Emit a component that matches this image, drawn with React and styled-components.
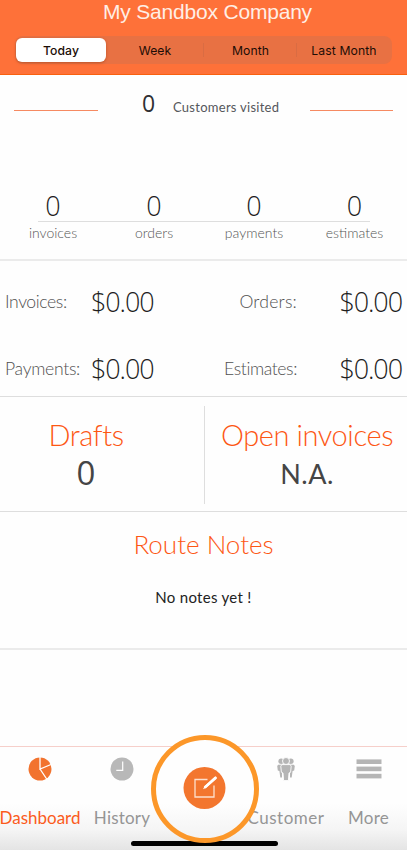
import React from "react";
import styled, { createGlobalStyle } from "styled-components";

const GlobalStyle = createGlobalStyle`
  * {
    box-sizing: border-box;
  }
  body {
    margin: 0;
    background-color: #fefefe;
  }
`;
const Container = styled.div`
  width: 407px;
  height: 850px;
  overflow: hidden;
  position: relative;
  display: flex;
  flex-direction: column;
  background-color: #fefefe;
  font-family: "Lato", "Open Sans", sans-serif;
`;
const Header = styled.header`
  height: 75px;
  background-color: #fe7139;
  border-bottom: 1px solid #f9600f;
  display: flex;
  flex-direction: column;
  align-items: center;
`;
const Company = styled.h1`
  margin: 0;
  height: 36px;
  padding-left: 8px;
  font-family: "Liberation Sans", sans-serif;
  font-size: 21px;
  line-height: 24px;
  font-weight: 400;
  letter-spacing: -0.2px;
  color: #ffeee5;
  white-space: nowrap;
`;
const Segments = styled.div`
  width: 377px;
  height: 28px;
  padding: 2px 1px;
  display: grid;
  grid-template-columns: 90px 98px 93px 94px;
  border-radius: 8px;
  background-color: #e87143;
`;
const Segment = styled.button`
  border: none;
  padding: 0;
  font-family: "Inter", sans-serif;
  font-size: 12.2px;
  font-weight: ${(props) => (props.$active ? 500 : 400)};
  letter-spacing: 0.1px;
  color: #1c0d06;
  border-radius: ${(props) => (props.$active ? "6px" : "0")};
  background-color: ${(props) => (props.$active ? "white" : "transparent")};
  box-shadow: ${(props) =>
    props.$active ? "0 1px 3px rgba(120, 40, 0, 0.4)" : "none"};
  background-image: ${(props) =>
    props.$divided ? "linear-gradient(#d96c43, #d96c43)" : "none"};
  background-size: 1px 14px;
  background-position: right center;
  background-repeat: no-repeat;
`;
const Visited = styled.section`
  height: 121px;
  padding: 16px 14px 0;
  display: grid;
  grid-template-columns: 84px 1fr 83px;
  align-items: start;
`;
const Rule = styled.div`
  height: 1px;
  margin-top: 19px;
  background-color: #f68a62;
`;
const VisitedText = styled.div`
  display: flex;
  align-items: baseline;
  padding-left: 44px;
  line-height: 24px;
  white-space: nowrap;
`;
const VisitedCount = styled.span`
  width: 31px;
  font-family: "Open Sans", sans-serif;
  font-size: 23px;
  color: #2f3033;
`;
const VisitedLabel = styled.span`
  font-size: 13px;
  letter-spacing: 0.27px;
  color: #55575b;
`;
const Counts = styled.section`
  height: 65px;
  border-bottom: 2px solid #ebebeb;
  padding: 0 2px;
`;
const CountRow = styled.div`
  display: grid;
  grid-template-columns: 102px 100px 100px 101px;
  text-align: center;
`;
const CountValue = styled.div`
  height: 25px;
  line-height: 20px;
  font-family: "Open Sans", sans-serif;
  font-weight: 300;
  font-size: 27px;
  color: #1e1e1e;
`;
const CountLine = styled.div`
  height: 1px;
  margin: 0 35px 0 36px;
  background-color: #dedede;
`;
const CountLabel = styled.div`
  line-height: 22px;
  font-weight: 300;
  font-size: 14px;
  color: #555;
`;
const Totals = styled.section`
  height: 136px;
  padding: 14px 5px 0 5px;
  border-bottom: 1px solid #dedede;
  display: grid;
  grid-template-columns: 86px 63px 1fr 105px;
  grid-auto-rows: 67px;
  white-space: nowrap;
`;
const TotalLabel = styled.div`
  line-height: 53px;
  font-weight: 300;
  font-size: 17.6px;
  letter-spacing: ${(props) => props.$spacing || -0.4}px;
  color: #505050;
  text-align: ${(props) => (props.$right ? "right" : "left")};
`;
const Money = styled.div`
  line-height: 54px;
  font-family: "Open Sans", sans-serif;
  font-weight: 300;
  font-size: 27px;
  letter-spacing: -1.1px;
  color: #1e1e1e;
  text-align: ${(props) => (props.$right ? "right" : "left")};
`;
const Summary = styled.section`
  height: 115px;
  border-bottom: 1px solid #dedede;
  display: grid;
  grid-template-columns: 205px 1fr;
`;
const SummaryItem = styled.div`
  height: 98px;
  margin-top: 9px;
  padding-top: 11px;
  display: flex;
  flex-direction: column;
  align-items: center;
  border-right: ${(props) => (props.$divided ? "1px solid #dedede" : "none")};
  padding-right: ${(props) => (props.$divided ? "32px" : "0")};
  padding-left: ${(props) => (props.$divided ? "0" : "2px")};
  white-space: nowrap;
`;
const Heading = styled.h2`
  margin: 0;
  font-weight: 300;
  font-size: ${(props) => props.$size || 29}px;
  line-height: 36px;
  letter-spacing: ${(props) => props.$spacing || 0}px;
  color: #fd5714;
`;
const SummaryValue = styled.div`
  line-height: ${(props) => (props.$digits ? 39 : 42)}px;
  font-family: ${(props) => (props.$digits ? '"Open Sans"' : '"Lato"')},
    sans-serif;
  font-size: ${(props) => (props.$digits ? 33 : 27)}px;
  letter-spacing: ${(props) => (props.$digits ? 0 : 0.5)}px;
  color: #454545;
`;
const Notes = styled.section`
  height: 138px;
  padding-top: 14px;
  border-bottom: 2px solid #ebebeb;
  display: flex;
  flex-direction: column;
  align-items: center;
`;
const NotesText = styled.p`
  margin: 24px 0 0;
  font-size: 15px;
  line-height: 22px;
  letter-spacing: 0.3px;
  color: #222;
`;
const TabBar = styled.nav`
  height: 104px;
  margin-top: auto;
  border-top: 1px solid #f6cfca;
  background: linear-gradient(#fefefe 55%, #f5f5f5 80%, #e4e4e4);
  display: grid;
  grid-template-columns: 80px 84px 81px 82px 80px;
`;
const Tab = styled.a`
  padding-top: 10px;
  display: flex;
  flex-direction: column;
  align-items: center;
  color: ${(props) => (props.$active ? "#fb5b1c" : "#959595")};
  white-space: nowrap;

  &:last-child {
    padding-left: 3px;
  }

  svg {
    display: block;
  }
`;
const TabLabel = styled.span`
  margin-top: 25px;
  font-size: 17px;
  line-height: 24px;
  letter-spacing: ${(props) => props.$spacing || 0}px;
`;
const Compose = styled.button`
  position: absolute;
  left: 151px;
  top: 735px;
  width: 108px;
  height: 108px;
  padding: 0 0 2px;
  border: 5px solid #fc9729;
  border-radius: 50%;
  background: linear-gradient(#fefefe 65%, #f3f3f3);
  display: flex;
  align-items: center;
  justify-content: center;
`;
const HomeBar = styled.div`
  position: absolute;
  left: 131px;
  top: 841px;
  width: 147px;
  height: 5px;
  border-radius: 3px;
  background-color: black;
`;

const PieIcon = () => (
  <svg width="24" height="24" viewBox="0 0 24 24">
    <circle cx="12" cy="12" r="11.5" fill="#f2732e" />
    <path
      d="M12 0V12L23 7.5M12 12L18.7 22"
      fill="none"
      stroke="#fff"
      strokeWidth="1.3"
    />
  </svg>
);
const ClockIcon = () => (
  <svg width="24" height="24" viewBox="0 0 24 24">
    <circle cx="12" cy="12" r="11.5" fill="#b8b8b8" />
    <path d="M12.7 4.5V13.3H6.3" fill="none" stroke="#fff" strokeWidth="1.2" />
  </svg>
);
const PeopleIcon = () => (
  <svg width="24" height="24" viewBox="0 0 24 24" fill="#b5b5b5">
    <circle cx="7.2" cy="4.2" r="2.8" />
    <circle cx="16.8" cy="4.2" r="2.8" />
    <path d="M4.2 7.7H8V20.5H6.3L5.4 14 3.8 13.5 3.2 9Z" />
    <path d="M19.8 7.7H16V20.5H17.7L18.6 14 20.2 13.5 20.8 9Z" />
    <g stroke="#fefefe" strokeWidth="0.9">
      <circle cx="12" cy="4" r="3.5" />
      <path d="M7.8 7.6H16.2L17.2 9.2 16.6 15.3 15 16 14.4 23.6H9.6L9 16 7.4 15.3 6.8 9.2Z" />
    </g>
  </svg>
);
const MenuIcon = () => (
  <svg width="26" height="24" viewBox="0 0 26 24" fill="#b5b5b5">
    <rect x="0.5" y="2.4" width="25" height="4.6" />
    <rect x="0.5" y="9.6" width="25" height="4.6" />
    <rect x="0.5" y="16.8" width="25" height="4.6" />
  </svg>
);
const ComposeIcon = () => (
  <svg width="44" height="44" viewBox="0 0 44 44">
    <circle cx="21.5" cy="22" r="21" fill="#f3762e" />
    <path
      d="M24.5 13.5H12V31H31V19.5"
      fill="none"
      stroke="#fde0cd"
      strokeWidth="1.3"
    />
    <path d="M20 23.2L21.5 20.2 31.7 10.8Q34.1 10 33.5 12.5L23.1 21.7Z" fill="#fff" />
    <path d="M22.3 21L32.5 12" stroke="#fff" strokeWidth="2.6" strokeLinecap="round" />
  </svg>
);

const counts = ["invoices", "orders", "payments", "estimates"];

const App = () => {
  return (
    <Container>
      <GlobalStyle />
      <Header>
        <Company>My Sandbox Company</Company>
        <Segments>
          <Segment $active>Today</Segment>
          <Segment $divided>Week</Segment>
          <Segment $divided>Month</Segment>
          <Segment>Last Month</Segment>
        </Segments>
      </Header>
      <Visited>
        <Rule />
        <VisitedText>
          <VisitedCount>0</VisitedCount>
          <VisitedLabel>Customers visited</VisitedLabel>
        </VisitedText>
        <Rule />
      </Visited>
      <Counts>
        <CountRow>
          {counts.map((name) => (
            <CountValue key={name}>0</CountValue>
          ))}
        </CountRow>
        <CountLine />
        <CountRow>
          {counts.map((name) => (
            <CountLabel key={name}>{name}</CountLabel>
          ))}
        </CountRow>
      </Counts>
      <Totals>
        <TotalLabel>Invoices:</TotalLabel>
        <Money>$0.00</Money>
        <TotalLabel $right $spacing={0.2}>
          Orders:
        </TotalLabel>
        <Money $right>$0.00</Money>
        <TotalLabel $spacing={-0.3}>Payments:</TotalLabel>
        <Money>$0.00</Money>
        <TotalLabel $right>Estimates:</TotalLabel>
        <Money $right>$0.00</Money>
      </Totals>
      <Summary>
        <SummaryItem $divided>
          <Heading $spacing={-0.4}>Drafts</Heading>
          <SummaryValue $digits>0</SummaryValue>
        </SummaryItem>
        <SummaryItem>
          <Heading $spacing={-0.4}>Open invoices</Heading>
          <SummaryValue>N.A.</SummaryValue>
        </SummaryItem>
      </Summary>
      <Notes>
        <Heading $size={26}>Route Notes</Heading>
        <NotesText>No notes yet !</NotesText>
      </Notes>
      <TabBar>
        <Tab $active>
          <PieIcon />
          <TabLabel>Dashboard</TabLabel>
        </Tab>
        <Tab>
          <ClockIcon />
          <TabLabel $spacing={0.2}>History</TabLabel>
        </Tab>
        <span />
        <Tab>
          <PeopleIcon />
          <TabLabel $spacing={0.5}>Customer</TabLabel>
        </Tab>
        <Tab>
          <MenuIcon />
          <TabLabel $spacing={0.3}>More</TabLabel>
        </Tab>
      </TabBar>
      <HomeBar />
      <Compose>
        <ComposeIcon />
      </Compose>
    </Container>
  );
};

export default App;
